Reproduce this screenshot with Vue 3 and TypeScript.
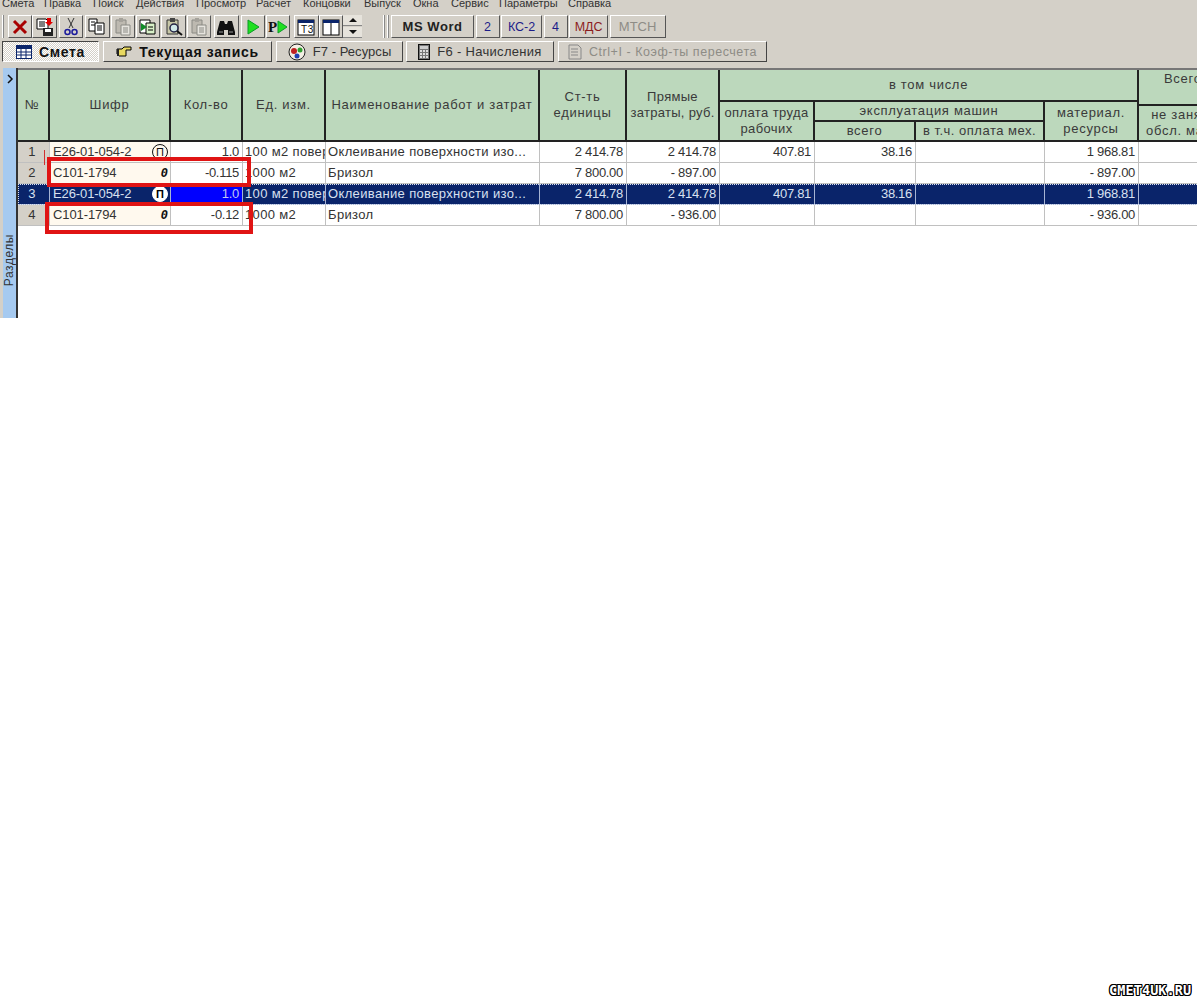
<script setup lang="ts">
const menu = [
  { t: 'Смета', w: 42 }, { t: 'Правка', w: 49 }, { t: 'Поиск', w: 43 }, { t: 'Действия', w: 60 },
  { t: 'Просмотр', w: 60 }, { t: 'Расчет', w: 47 }, { t: 'Концовки', w: 61 }, { t: 'Выпуск', w: 49 },
  { t: 'Окна', w: 38 }, { t: 'Сервис', w: 48 }, { t: 'Параметры', w: 69 }, { t: 'Справка', w: 60 },
]
const tools = ['x', 'save', 'cut', 'copy', 'paste', 'pasteb', 'find', 'pasted', 'bino', 'play', 'pplay', 'tbl', 'cols']
const textBtns = [
  { t: 'MS Word', w: 83, c: 'bold' }, { t: '2', w: 24, c: 'navy' }, { t: 'КС-2', w: 41, c: 'navy' },
  { t: '4', w: 24, c: 'navy' }, { t: 'МДС', w: 39, c: 'maroon' }, { t: 'МТСН', w: 56, c: 'off' },
]
interface Row { n: number; code: string; mark: string; qty: string; unit: string; name: string; price: string; direct: string; pay: string; mach: string; mech: string; mat: string; sel?: boolean }
const rows: Row[] = [
  { n: 1, code: 'Е26-01-054-2', mark: 'П', qty: '1.0', unit: '100 м2 повер', name: 'Оклеивание поверхности изо...', price: '2 414.78', direct: '2 414.78', pay: '407.81', mach: '38.16', mech: '', mat: '1 968.81' },
  { n: 2, code: 'С101-1794', mark: '0', qty: '-0.115', unit: '1000 м2', name: 'Бризол', price: '7 800.00', direct: '- 897.00', pay: '', mach: '', mech: '', mat: '- 897.00' },
  { n: 3, code: 'Е26-01-054-2', mark: 'П', qty: '1.0', unit: '100 м2 повер', name: 'Оклеивание поверхности изо...', price: '2 414.78', direct: '2 414.78', pay: '407.81', mach: '38.16', mech: '', mat: '1 968.81', sel: true },
  { n: 4, code: 'С101-1794', mark: '0', qty: '-0.12', unit: '1000 м2', name: 'Бризол', price: '7 800.00', direct: '- 936.00', pay: '', mach: '', mech: '', mat: '- 936.00' },
]
</script>

<template>
  <div class="page">
    <nav class="menu">
      <span v-for="m in menu" :key="m.t" class="menu-item" :style="{ width: m.w + 'px' }">{{ m.t }}</span>
    </nav>

    <div class="toolbar">
      <span class="grip"></span>
      <button v-for="t in tools" :key="t" class="tool" :class="'tool-' + t">
        <svg width="20" height="20" viewBox="0 0 20 20">
          <template v-if="t === 'x'">
            <path d="M4 4 L16 16 M16 4 L4 16" stroke="#a80000" stroke-width="3" fill="none" />
          </template>
          <template v-else-if="t === 'save'">
            <path d="M2 2h9l2 2v8H2z" fill="#fff" stroke="#000" />
            <path d="M4 5h6M4 7h6M4 9h6" stroke="#000" />
            <rect x="8" y="11" width="10" height="8" fill="#222" />
            <rect x="10" y="12" width="6" height="3" fill="#fff" />
            <path d="M12 1h4v4h2l-4 4-4-4h2z" fill="#e00000" />
          </template>
          <template v-else-if="t === 'cut'">
            <path d="M7 1 L12 11 M13 1 L8 11" stroke="#333" stroke-width="1" fill="none" />
            <circle cx="6.5" cy="15" r="2.5" fill="none" stroke="#1a1a9c" stroke-width="1.5" />
            <circle cx="13.5" cy="15" r="2.5" fill="none" stroke="#1a1a9c" stroke-width="1.5" />
          </template>
          <template v-else-if="t === 'copy'">
            <path d="M2 2h8v12H2z" fill="#fff" stroke="#000" />
            <path d="M4 5h4M4 8h4" stroke="#000" />
            <path d="M8 6h9v11H8z" fill="#fff" stroke="#000" />
            <path d="M10 9h5M10 11h5M10 13h5" stroke="#000" />
          </template>
          <template v-else-if="t === 'paste' || t === 'pasted'">
            <path d="M3 3h10v13H3z" fill="#bdb9b0" stroke="#8a8a84" />
            <rect x="6" y="1" width="4" height="4" fill="#a5a29b" />
            <path d="M8 8h9v10H8z" fill="#e6e4de" stroke="#8a8a84" />
            <path d="M10 11h5M10 13h5M10 15h5" stroke="#8a8a84" />
          </template>
          <template v-else-if="t === 'pasteb'">
            <path d="M2 3h10v13H2z" fill="#fff" stroke="#000" />
            <path d="M8 6h9v11H8z" fill="#d8f0c8" stroke="#000" />
            <path d="M3 6l6 4-6 4z" fill="#108a28" />
            <path d="M10 10h5M10 13h5" stroke="#000" />
          </template>
          <template v-else-if="t === 'find'">
            <path d="M3 3h11v14H3z" fill="#c8c8a8" stroke="#333" />
            <rect x="6" y="1" width="5" height="4" fill="#444" />
            <circle cx="10" cy="11" r="4" fill="#cfe8e8" stroke="#224" stroke-width="1.5" />
            <path d="M13 14l5 4" stroke="#111" stroke-width="2" />
          </template>
          <template v-else-if="t === 'bino'">
            <path d="M1 15l3-11h4l1 3h2l1-3h4l3 11v3h-7v-5H8v5H1z" fill="#111" />
            <path d="M3 15h4M13 15h4" stroke="#999" />
          </template>
          <template v-else-if="t === 'play'">
            <path d="M5 3l11 7-11 7z" fill="#20e020" stroke="#0a9a28" />
          </template>
          <template v-else-if="t === 'pplay'">
            <text x="0" y="15" class="p-letter">P</text>
            <path d="M10 4l9 6-9 6z" fill="#20e020" stroke="#0a9a28" />
          </template>
          <template v-else-if="t === 'tbl'">
            <rect x="2" y="3" width="16" height="15" fill="#fff" stroke="#000" />
            <rect x="2" y="3" width="16" height="3" fill="#0a246a" />
            <text x="5" y="16" class="t3-label">Т3</text>
          </template>
          <template v-else>
            <rect x="2" y="3" width="16" height="15" fill="#fff" stroke="#000" />
            <rect x="2" y="3" width="16" height="3" fill="#0a246a" />
            <path d="M10 6v12" stroke="#000" />
          </template>
        </svg>
      </button>
      <div class="spin">
        <span class="spin-up"></span>
        <span class="spin-down"></span>
      </div>
      <span class="sep"></span>
      <span class="sep sep-b"></span>
      <button v-for="b in textBtns" :key="b.t" class="txt-btn" :class="b.c" :style="{ width: b.w + 'px' }">{{ b.t }}</button>
    </div>

    <div class="tabs">
      <button class="tab tab-a active">
        <svg width="16" height="14" viewBox="0 0 16 14"><rect x="0.5" y="0.5" width="15" height="13" fill="#fff" stroke="#0a246a" /><rect x="1" y="1" width="14" height="3" fill="#0a246a" /><path d="M1 7h14M1 10h14M5 4v10M10 4v10" stroke="#0a246a" /></svg>
        <b>Смета</b>
      </button>
      <button class="tab tab-b">
        <svg width="16" height="12" viewBox="0 0 16 12"><path d="M1 3h5l2-2h7v3h-5v6H3L1 8z" fill="#e8d860" stroke="#000" /><path d="M1 3h2v7H1z" fill="#222" /></svg>
        <b>Текущая запись</b>
      </button>
      <button class="tab tab-c">
        <svg width="18" height="18" viewBox="0 0 18 18"><circle cx="9" cy="9" r="8" fill="#f4efe4" stroke="#222" /><circle cx="6" cy="8" r="3" fill="#c02020" /><circle cx="12" cy="7" r="2.5" fill="#30a030" /><circle cx="9" cy="13" r="2.5" fill="#2040b0" /></svg>
        <span>F7 - Ресурсы</span>
      </button>
      <button class="tab tab-d">
        <svg width="12" height="16" viewBox="0 0 12 16"><rect x="0.5" y="0.5" width="11" height="15" fill="#777" stroke="#111" /><rect x="2" y="2" width="8" height="3" fill="#ccc" /><path d="M2 7h2M5 7h2M8 7h2M2 10h2M5 10h2M8 10h2M2 13h2M5 13h2M8 13h2" stroke="#fff" stroke-width="1.5" /></svg>
        <span>F6 - Начисления</span>
      </button>
      <button class="tab tab-e off">
        <svg width="14" height="16" viewBox="0 0 14 16"><path d="M1 1h9l3 3v11H1z" fill="#d4d0c8" stroke="#888" /><path d="M3 5h7M3 8h7M3 11h7" stroke="#888" /></svg>
        <span>Ctrl+I - Коэф-ты пересчета</span>
      </button>
    </div>

    <div class="work">
      <aside class="side">
        <svg class="side-arrow" width="8" height="10" viewBox="0 0 8 10"><path d="M2 1l4 4-4 4" fill="none" stroke="#111" stroke-width="1.5" /></svg>
        <span class="side-label">Разделы</span>
      </aside>
      <div class="grid">
        <div class="head">
          <div class="h c1">№</div>
          <div class="h c2">Шифр</div>
          <div class="h c3">Кол-во</div>
          <div class="h c4">Ед. изм.</div>
          <div class="h c5">Наименование работ и затрат</div>
          <div class="h c6">Ст-ть<br />единицы</div>
          <div class="h c7">Прямые<br />затраты, руб.</div>
          <div class="h inc">в том числе</div>
          <div class="h pay">оплата труда<br />рабочих</div>
          <div class="h mach">эксплуатация машин</div>
          <div class="h machall">всего</div>
          <div class="h mech">в т.ч. оплата мех.</div>
          <div class="h mat">материал.<br />ресурсы</div>
          <div class="h tot">Всего</div>
          <div class="h notz">не занятых<br />обсл. машин</div>
        </div>
        <div v-for="r in rows" :key="r.n" class="row" :class="{ sel: r.sel }">
          <div class="cell d1">{{ r.n }}</div>
          <div class="cell d2">
            <span>{{ r.code }}</span>
            <i class="mark" :class="r.mark === 'П' ? 'mark-p' : 'mark-z'">{{ r.mark }}</i>
          </div>
          <div class="cell d3 num">{{ r.qty }}</div>
          <div class="cell d4">{{ r.unit }}</div>
          <div class="cell d5">{{ r.name }}</div>
          <div class="cell d6 num">{{ r.price }}</div>
          <div class="cell d7 num">{{ r.direct }}</div>
          <div class="cell d8 num">{{ r.pay }}</div>
          <div class="cell d9 num">{{ r.mach }}</div>
          <div class="cell d10 num">{{ r.mech }}</div>
          <div class="cell d11 num">{{ r.mat }}</div>
          <div class="cell d12"></div>
        </div>
      </div>
    </div>

    <div class="redbox redbox-a"></div>
    <div class="redbox redbox-b"></div>
    <div class="tick"></div>
    <div class="watermark">СМЕТ4UK.RU</div>
  </div>
</template>

<style scoped>
.page {
  position: relative;
  width: 1197px;
  height: 1000px;
  overflow: hidden;
  background: #fff;
  font-family: "Liberation Sans", Arial, sans-serif;
  font-size: 12px;
  letter-spacing: 0.55px;
  color: #222;
}
button { font-family: inherit; letter-spacing: inherit; padding: 0; margin: 0; cursor: default; }
.menu { height: 14px; background: #d4d0c8; display: flex; padding-left: 2px; overflow: hidden; }
.menu-item { font-size: 11px; line-height: 10px; margin-top: -2px; letter-spacing: 0; white-space: nowrap; color: #333; }
.toolbar { height: 25px; background: #d4d0c8; display: flex; align-items: stretch; padding-left: 2px; box-sizing: border-box; padding-bottom: 1px; padding-top: 1px; }
.grip { width: 2px; box-sizing: border-box; margin-right: 4px; border-left: 1px solid #fff; border-right: 1px solid #888; }
.tool {
  width: 24.4px; background: #d4d0c8;
  border: 1px solid; border-color: #fff #555 #555 #fff;
  display: flex; align-items: center; justify-content: center;
}
.tool-cut, .tool-copy, .tool-play { margin-left: 2px; }
.tool-paste, .tool-pasteb, .tool-find, .tool-pasted, .tool-pplay { margin-left: 1px; }
.tool-bino { margin-left: 3px; }
.tool-tbl { margin-left: 4px; }
.p-letter { font: 900 15px "Liberation Serif", serif; fill: #111; }
.t3-label { font: 10px "Liberation Sans", sans-serif; fill: #111; }
.spin { width: 19px; display: flex; flex-direction: column; gap: 1px; }
.spin span { flex: 1; display: flex; align-items: center; justify-content: center; background: #e6e3dc; border-bottom: 1px solid #888; }
.spin-up::before { content: ""; border: 4px solid transparent; border-top: 0; border-bottom-color: #111; }
.spin-down::before { content: ""; border: 4px solid transparent; border-bottom: 0; border-top-color: #111; }
.sep { width: 2px; box-sizing: border-box; margin-left: 21px; border-left: 1px solid #fff; border-right: 1px solid #888; }
.sep-b { margin-left: 2px; margin-right: 2px; }
.txt-btn {
  background: #d4d0c8; border: 1px solid; border-color: #fff #555 #555 #fff;
  margin-right: 1.5px; font-size: 13px;
}
.bold { font-weight: 700; color: #222; }
.navy { color: #1c1c88; font-size: 12.5px; letter-spacing: 0; }
.maroon { color: #8c1c1c; font-size: 12.5px; letter-spacing: 0; }
.off { color: #8e8c86; letter-spacing: 0; }
.tabs { height: 28px; background: #d4d0c8; display: flex; gap: 4px; padding: 2px 0 5px 2px; box-sizing: border-box; }
.tab {
  display: flex; align-items: center; justify-content: center; gap: 7px;
  background: #d4d0c8; border: 1px solid; border-color: #fff #444 #444 #fff;
  font-size: 13px; color: #333; letter-spacing: .3px;
}
.tab b { color: #111; font-size: 14px; letter-spacing: .65px; }
.tab-a { width: 97px; }
.tab-b { width: 169px; }
.tab-c { width: 127px; letter-spacing: .05px; }
.tab-d { width: 148px; margin-left: -1px; }
.tab-e { width: 209px; color: #8e8c86; font-size: 12.5px; letter-spacing: .55px; }
.active {
  border-color: #444 #fff #fff #444;
  background: repeating-conic-gradient(#fff 0 25%, #d4d0c8 0 50%) 0 0 / 2px 2px;
}
.work {
  display: flex; align-items: stretch; height: 250px;
  border-top: 1px solid #d4d0c8;
  background: #fff;
}
.side {
  position: relative; width: 13px; flex: none;
  margin-left: 3px;
  background: #a6caf0;
  border-right: 2px solid #333;
  box-shadow: -3px 0 0 #d4d0c8;
}
.side-arrow { position: absolute; top: 6px; left: 3px; }
.side-label {
  position: absolute; left: -1px; bottom: 32px;
  writing-mode: vertical-rl; transform: rotate(180deg);
  font-size: 12px; line-height: 14px; color: #333;
}
.grid { flex: 1; min-width: 0; overflow: hidden; border-top: 2px solid #777; }
.head {
  display: grid;
  grid-template-columns: 32px 121px 72px 83px 214px 87px 93px 95px 101px 129px 94px 80px;
  grid-template-rows: 32px 4px 16px 20px;
  width: 1201px;
  height: 72px;
}
.h {
  background: #bcd8bc;
  border-right: 2px solid #222;
  border-bottom: 2px solid #222;
  box-sizing: border-box;
  display: flex; align-items: center; justify-content: center;
  text-align: center;
  line-height: 16px;
  white-space: nowrap;
  color: #3a3a3a;
  font-size: 13px;
  letter-spacing: .7px;
}
.c1 { grid-area: 1 / 1 / 5 / 2; padding-right: 2px; }
.c2 { grid-area: 1 / 2 / 5 / 3; }
.c3 { grid-area: 1 / 3 / 5 / 4; }
.c4 { grid-area: 1 / 4 / 5 / 5; }
.c5 { grid-area: 1 / 5 / 5 / 6; }
.c6 { grid-area: 1 / 6 / 5 / 7; }
.c7 { grid-area: 1 / 7 / 5 / 8; letter-spacing: .3px; }
.inc { grid-area: 1 / 8 / 2 / 12; }
.pay { grid-area: 2 / 8 / 5 / 9; letter-spacing: .4px; }
.mach { grid-area: 2 / 9 / 4 / 11; }
.machall { grid-area: 4 / 9 / 5 / 10; }
.mech { grid-area: 4 / 10 / 5 / 11; letter-spacing: .5px; }
.mat { grid-area: 2 / 11 / 5 / 12; }
.tot { grid-area: 1 / 12 / 3 / 13; align-items: flex-start; padding-top: 1px; justify-content: flex-start; padding-left: 25px; }
.notz { grid-area: 3 / 12 / 5 / 13; justify-content: flex-start; padding-left: 7px; text-align: center; }
.row {
  display: grid;
  grid-template-columns: 32px 121px 72px 83px 214px 87px 93px 95px 101px 129px 94px 80px;
  width: 1201px;
  height: 21px;
  background: #fff;
}
.cell {
  box-sizing: border-box;
  border-right: 1px solid #c0c0c0;
  border-bottom: 1px solid #c0c0c0;
  line-height: 20px;
  white-space: nowrap;
  overflow: hidden;
  padding: 0 3px 0 2px;
  color: #333;
  font-size: 13px;
  letter-spacing: .35px;
}
.num { text-align: right; letter-spacing: -.3px; }
.d1 { background: #d4d0c8; text-align: center; padding-right: 5px; }
.d2 { background: #fff9ee; display: flex; justify-content: space-between; align-items: center; padding-left: 3px; padding-right: 2px; letter-spacing: -.1px; }
.mark { font-style: normal; display: flex; align-items: center; justify-content: center; }
.mark-p { width: 16px; height: 16px; border: 1px solid #111; border-radius: 50%; box-sizing: border-box; font-size: 11px; color: #111; letter-spacing: 0; }
.mark-z { font: italic 700 12px "DejaVu Sans Mono", monospace; color: #111; margin-right: 0; letter-spacing: 0; }
.sel { background: #0a246a; outline: 1px dotted #d8e0f0; outline-offset: -1px; }
.sel .cell {
  background: #0a246a; color: #d8e0f0;
  border-right-color: #a6b4d4;
  border-bottom-color: #a6b4d4;
}
.sel .d3 { background: #0000ff; color: #c0c8f0; }
.sel .mark-p { background: #fff; color: #000; border-color: #fff; font-weight: 700; }
.sel .mark-z { color: #fff; }
.redbox { position: absolute; border: 4px solid #e01414; box-sizing: border-box; pointer-events: none; }
.redbox-a { left: 47px; top: 157px; width: 204px; height: 30px; }
.redbox-b { left: 45px; top: 202px; width: 208px; height: 32px; }
.tick { position: absolute; left: 44px; top: 150px; width: 1px; height: 15px; background: #d03030; }
.watermark {
  position: absolute; left: 1109px; top: 982px;
  font: 700 13.5px "DejaVu Sans Mono", monospace;
  letter-spacing: 0.1px;
  color: #fff;
  text-shadow: 1px 0 0 #000, -1px 0 0 #000, 0 1px 0 #000, 0 -1px 0 #000, 1px 1px 0 #000, -1px -1px 0 #000, 1px -1px 0 #000, -1px 1px 0 #000;
}
</style>
